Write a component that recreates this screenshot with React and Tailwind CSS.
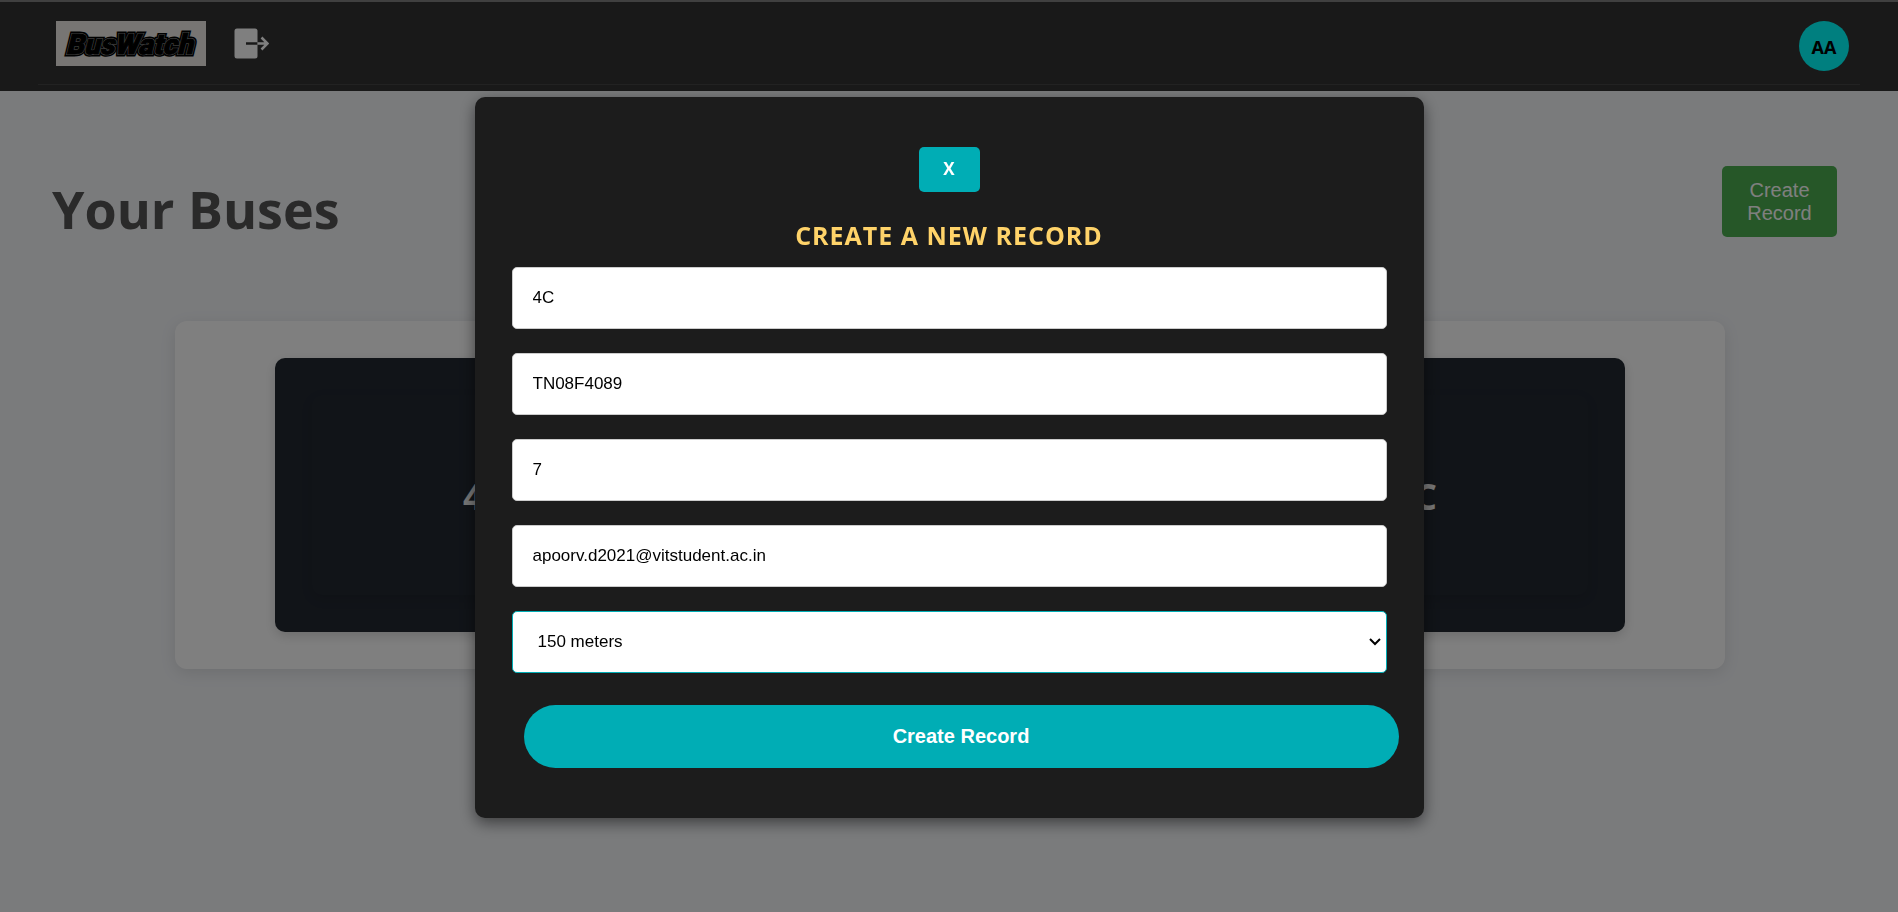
import React from "react";

const fields = [
  { id: "route", label: "Route", type: "text", value: "4C" },
  { id: "plate", label: "Registration number", type: "text", value: "TN08F4089" },
  { id: "stops", label: "Number of stops", type: "text", value: "7" },
  { id: "email", label: "Driver email", type: "email", value: "apoorv.d2021@vitstudent.ac.in" },
];

function Logo() {
  return (
    <svg viewBox="0 0 150 45" className="h-[45px] w-[150px] bg-[#eeebe7]" role="img" aria-label="BusWatch">
      <g
        transform="skewX(-14)"
        fontFamily="Roboto, sans-serif"
        fontWeight="900"
        fontSize="28"
        strokeLinejoin="miter"
      >
        <text x="18" y="33" fill="#000" stroke="#000" strokeWidth="5">
          BusWatch
        </text>
        <text x="18" y="33" fill="#000" stroke="#999" strokeWidth="2" aria-hidden="true">
          BusWatch
        </text>
        <text x="18" y="33" fill="#000" stroke="#000" strokeWidth="1" aria-hidden="true">
          BusWatch
        </text>
      </g>
    </svg>
  );
}

function ExitIcon() {
  return (
    <svg viewBox="0 0 35 31" className="h-[31px] w-[35px]" aria-hidden="true">
      <rect x="0.5" y="0.5" width="23" height="30" rx="2.5" fill="#fff" />
      <path d="M12 15.5H23.5" stroke="#333" strokeWidth="2.5" />
      <path d="M23.5 15.5H33M27.5 9.5l6 6-6 6" fill="none" stroke="#fff" strokeWidth="2.5" />
    </svg>
  );
}

function Header() {
  return (
    <header className="border-t-2 border-[#808080] bg-[#333] px-[38px] pb-1.5">
      <div className="flex items-start justify-between border-b border-[#444] pt-[19px] pr-[11px] pb-[13px] pl-[18px]">
        <div className="flex items-start gap-7">
          <Logo />
          <button type="button" aria-label="Log out" className="pt-[7px]">
            <ExitIcon />
          </button>
        </div>
        <div className="flex size-[50px] items-center justify-center rounded-full bg-[#0ff] pt-0.5 text-lg font-bold text-black">
          AA
        </div>
      </div>
    </header>
  );
}

function RecordDialog() {
  return (
    <div className="fixed inset-0 z-10 flex items-center justify-center bg-black/50 pt-0.5">
      <div
        role="dialog"
        aria-modal="true"
        aria-labelledby="dialog-title"
        className="flex w-1/2 flex-col rounded-[10px] bg-[#1c1c1c] px-[37px] py-[50px] shadow-[0_5px_15px_rgba(0,0,0,0.5)]"
      >
        <button
          type="button"
          aria-label="Close"
          className="h-[45px] w-[61px] self-center rounded-[5px] bg-[#00adb5] text-[17px] font-bold text-white"
        >
          X
        </button>
        <h2
          id="dialog-title"
          className="mt-[23px] mb-3 text-center text-[25px] leading-[40px] font-bold tracking-[1px] text-[#ffd369] uppercase"
        >
          Create a new record
        </h2>
        <form className="flex flex-col gap-6 font-['Liberation_Sans',Arial,sans-serif] text-[17px]">
          {fields.map((f) => (
            <input
              key={f.id}
              id={f.id}
              type={f.type}
              aria-label={f.label}
              defaultValue={f.value}
              className="block h-[62px] w-full rounded-[5px] border border-[#ccc] bg-white px-5 text-black"
            />
          ))}
          <div className="relative">
            <select
              id="radius"
              aria-label="Alert radius"
              defaultValue="150"
              className="block h-[62px] w-full appearance-none rounded-[5px] border border-[#00adb5] bg-white pr-6 pl-[25px] text-black"
            >
              <option value="150">150 meters</option>
            </select>
            <svg
              viewBox="0 0 12 8"
              className="pointer-events-none absolute top-[27px] right-[6px] h-2 w-3"
              fill="none"
              stroke="#000"
              strokeWidth="2"
              aria-hidden="true"
            >
              <path d="M1 1l5 5 5-5" />
            </svg>
          </div>
          <button
            type="submit"
            className="mt-2 -mr-3 ml-3 h-[63px] rounded-full bg-[#00adb5] text-xl font-bold text-white"
          >
            Create Record
          </button>
        </form>
      </div>
    </div>
  );
}

export default function App() {
  return (
    <div className="min-h-screen bg-[#f4f6f9] font-['Open_Sans','Noto_Sans',sans-serif]">
      <Header />
      <main>
        <div className="flex items-start justify-between pt-[75px] pr-[61px] pl-[52px]">
          <h1 className="pt-[3px] text-[52px] leading-[80px] font-bold text-[#555]">Your Buses</h1>
          <button
            type="button"
            className="h-[71px] w-[115px] rounded-[5px] bg-[#4caf50] px-5 font-['Liberation_Sans',Arial,sans-serif] text-xl leading-[23px] text-white"
          >
            Create Record
          </button>
        </div>
        <section className="mt-[72px] mr-[173px] ml-[175px] rounded-xl bg-white px-[100px] py-[37px] shadow-[0_4px_16px_rgba(0,0,0,0.1)]">
          <div className="rounded-[10px] bg-[#222831] p-[37px] shadow-[0_4px_12px_rgba(0,0,0,0.15)]">
            <div className="flex h-[200px] items-center justify-between rounded-[10px] px-[151px] pt-1 text-4xl font-bold text-[#eee] shadow-[0_4px_12px_rgba(0,0,0,0.1)]">
              <span>4C</span>
              <span>4C</span>
            </div>
          </div>
        </section>
      </main>
      <RecordDialog />
    </div>
  );
}
